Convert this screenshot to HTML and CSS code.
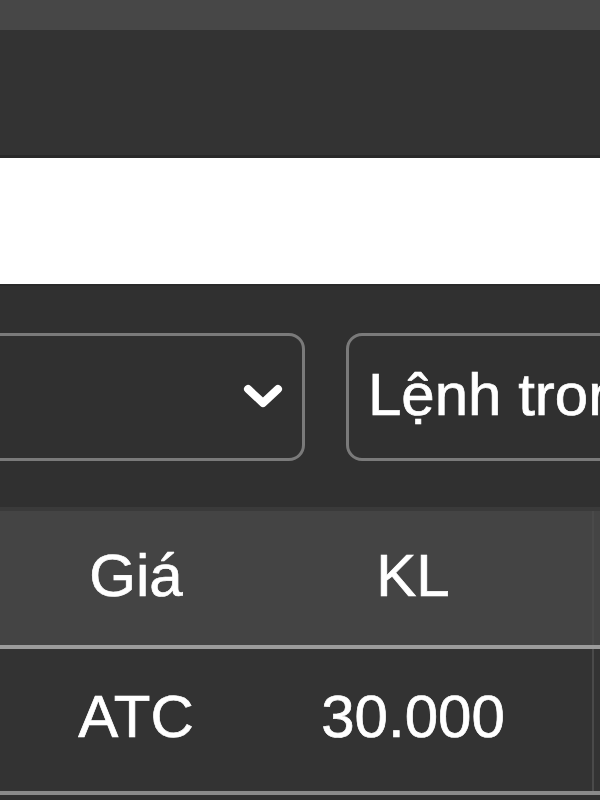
FILE: index.html
```html
<!DOCTYPE html>
<html lang="vi">
<head>
<meta charset="utf-8">
<title>Lệnh trong ngày</title>
<link rel="stylesheet" href="styles.css">
</head>
<body>
<div class="page">
  <div class="topbar"></div>
  <div class="nav"></div>
  <div class="search"></div>
  <div class="filters">
    <div class="select select-first">
      <svg class="chevron" width="42" height="28" viewBox="0 0 42 28" aria-hidden="true">
        <path d="M6 6 L21 20 L36 6" fill="none" stroke="#ffffff" stroke-width="8" stroke-linecap="round" stroke-linejoin="round"/>
      </svg>
    </div>
    <div class="select select-second">
      <span class="select-text">Lệnh trong ngày</span>
    </div>
  </div>
  <div class="table">
    <div class="row head">
      <div class="cell">Giá</div>
      <div class="cell">KL</div>
      <div class="cell edge"></div>
    </div>
    <div class="row body">
      <div class="cell">ATC</div>
      <div class="cell">30.000</div>
      <div class="cell edge"></div>
    </div>
  </div>
</div>
</body>
</html>
```
FILE: styles.css
```css
html, body {
  margin: 0;
  padding: 0;
  background: #303030;
}
body {
  width: 600px;
  height: 800px;
  overflow: hidden;
  font-family: "Liberation Sans", Arial, sans-serif;
  color: #ffffff;
}
.page {
  width: 600px;
  overflow: hidden;
}
.topbar {
  height: 30px;
  background: #474747;
}
.nav {
  height: 125px;
  background: #333333;
  border-bottom: 3px solid #292929;
}
.search {
  height: 126px;
  background: #ffffff;
  border-bottom: 2px solid #2a2a2a;
}
.filters {
  display: flex;
  gap: 41px;
  padding: 47px 0 46px;
  margin-left: -40px;
  background: #303030;
}
.select {
  box-sizing: border-box;
  height: 128px;
  border: 3px solid #7a7a7a;
  border-radius: 16px;
  display: flex;
  align-items: center;
  flex: none;
}
.select-first {
  width: 345px;
  justify-content: flex-end;
  padding-right: 18px;
}
.chevron {
  display: block;
}
.select-second {
  width: 400px;
  padding-left: 19px;
}
.select-text {
  font-size: 60px;
  white-space: nowrap;
  line-height: 1;
  margin-top: -4px;
  -webkit-text-stroke: 0.7px #ffffff;
}
.table {
  background: #333333;
}
.row {
  display: grid;
  grid-template-columns: 272px 282px 38px 8px;
  align-items: center;
}
.cell {
  text-align: center;
  font-size: 60px;
  line-height: 1;
  white-space: nowrap;
  -webkit-text-stroke: 0.7px #ffffff;
}
.edge {
  grid-column: 4;
  align-self: stretch;
  border-left: 2px solid #4a4a4a;
}
.head {
  height: 134px;
  background: #444444;
  border-top: 4px solid #3a3a3a;
  border-bottom: 4px solid #9c9c9c;
}
.head .cell {
  padding-bottom: 4px;
}
.body {
  height: 142px;
  background: #333333;
  border-bottom: 4px solid #8a8a8a;
}
.body .cell {
  padding-bottom: 6px;
}
```
